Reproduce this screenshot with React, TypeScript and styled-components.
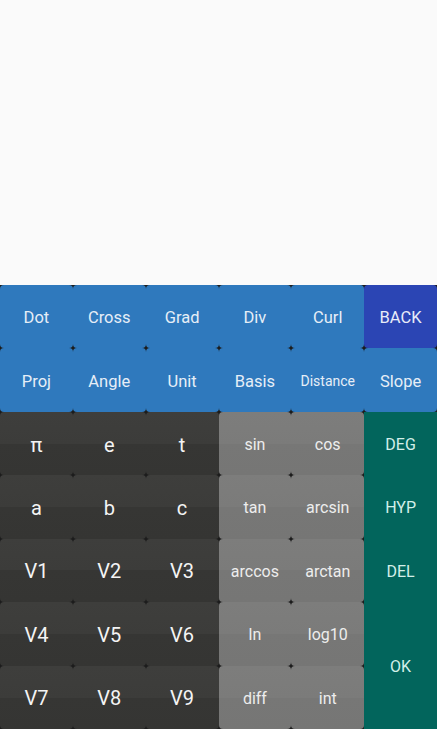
import React from "react";
import styled, { createGlobalStyle, css } from "styled-components";

const GlobalStyle = createGlobalStyle`
	html, body {
		margin: 0;
		padding: 0;
		height: 100%;
	}
	body {
		font-family: Roboto, "Liberation Sans", sans-serif;
		background: #fafafa;
	}
	#root {
		height: 100%;
	}
`;

type Tone = "blue" | "back" | "dark" | "gray" | "teal";

const tones = {
	blue: css`
		background: #2f79bd;
		color: #e6eef7;
		font-size: 16.5px;
	`,
	back: css`
		background: #2b45b4;
		color: #e8ecf8;
		font-size: 16.5px;
	`,
	dark: css`
		background: linear-gradient(#3e3e3c 0%, #3c3c3a 50%, #363634 50%, #353533 100%);
		color: #f4f4f4;
		font-size: 20px;
	`,
	gray: css`
		background: linear-gradient(#7d7d7c 0%, #7b7b7a 50%, #777776 50%, #767675 100%);
		color: #ededed;
		font-size: 16px;
	`,
	teal: css`
		background: #02655c;
		color: #d3efe9;
		border-radius: 0;
		font-size: 16px;
	`,
};

const Screen = styled.div`
	height: 100%;
	display: flex;
	flex-direction: column;
`;

const Display = styled.div`
	flex: 1;
	background: #fafafa;
`;

const Pad = styled.div`
	height: 444px;
	display: grid;
	grid-template-columns: repeat(6, 1fr);
	grid-template-rows: repeat(7, 1fr);
	background: #1c1c1c;
`;

const Key = styled.div<{ $tone: Tone; $small?: boolean; $span?: number }>`
	display: flex;
	align-items: center;
	justify-content: center;
	border-radius: 4px;
	grid-row: ${(p) => (p.$span ? `span ${p.$span}` : "auto")};
	padding-top: 2px;
	${(p) => tones[p.$tone]}
	${(p) =>
		p.$small &&
		css`
			font-size: 14px;
		`}
`;

type KeyDef = { label: string; tone: Tone; small?: boolean; span?: number };

const keys: KeyDef[] = [
	{ label: "Dot", tone: "blue" },
	{ label: "Cross", tone: "blue" },
	{ label: "Grad", tone: "blue" },
	{ label: "Div", tone: "blue" },
	{ label: "Curl", tone: "blue" },
	{ label: "BACK", tone: "back" },
	{ label: "Proj", tone: "blue" },
	{ label: "Angle", tone: "blue" },
	{ label: "Unit", tone: "blue" },
	{ label: "Basis", tone: "blue" },
	{ label: "Distance", tone: "blue", small: true },
	{ label: "Slope", tone: "blue" },
	{ label: "π", tone: "dark" },
	{ label: "e", tone: "dark" },
	{ label: "t", tone: "dark" },
	{ label: "sin", tone: "gray" },
	{ label: "cos", tone: "gray" },
	{ label: "DEG", tone: "teal" },
	{ label: "a", tone: "dark" },
	{ label: "b", tone: "dark" },
	{ label: "c", tone: "dark" },
	{ label: "tan", tone: "gray" },
	{ label: "arcsin", tone: "gray" },
	{ label: "HYP", tone: "teal" },
	{ label: "V1", tone: "dark" },
	{ label: "V2", tone: "dark" },
	{ label: "V3", tone: "dark" },
	{ label: "arccos", tone: "gray" },
	{ label: "arctan", tone: "gray" },
	{ label: "DEL", tone: "teal" },
	{ label: "V4", tone: "dark" },
	{ label: "V5", tone: "dark" },
	{ label: "V6", tone: "dark" },
	{ label: "ln", tone: "gray" },
	{ label: "log10", tone: "gray" },
	{ label: "OK", tone: "teal", span: 2 },
	{ label: "V7", tone: "dark" },
	{ label: "V8", tone: "dark" },
	{ label: "V9", tone: "dark" },
	{ label: "diff", tone: "gray" },
	{ label: "int", tone: "gray" },
];

const App = () => {
	return (
		<Screen>
			<GlobalStyle />
			<Display />
			<Pad>
				{keys.map((k) => (
					<Key key={k.label} $tone={k.tone} $small={k.small} $span={k.span}>
						{k.label}
					</Key>
				))}
			</Pad>
		</Screen>
	);
};

export default App;
